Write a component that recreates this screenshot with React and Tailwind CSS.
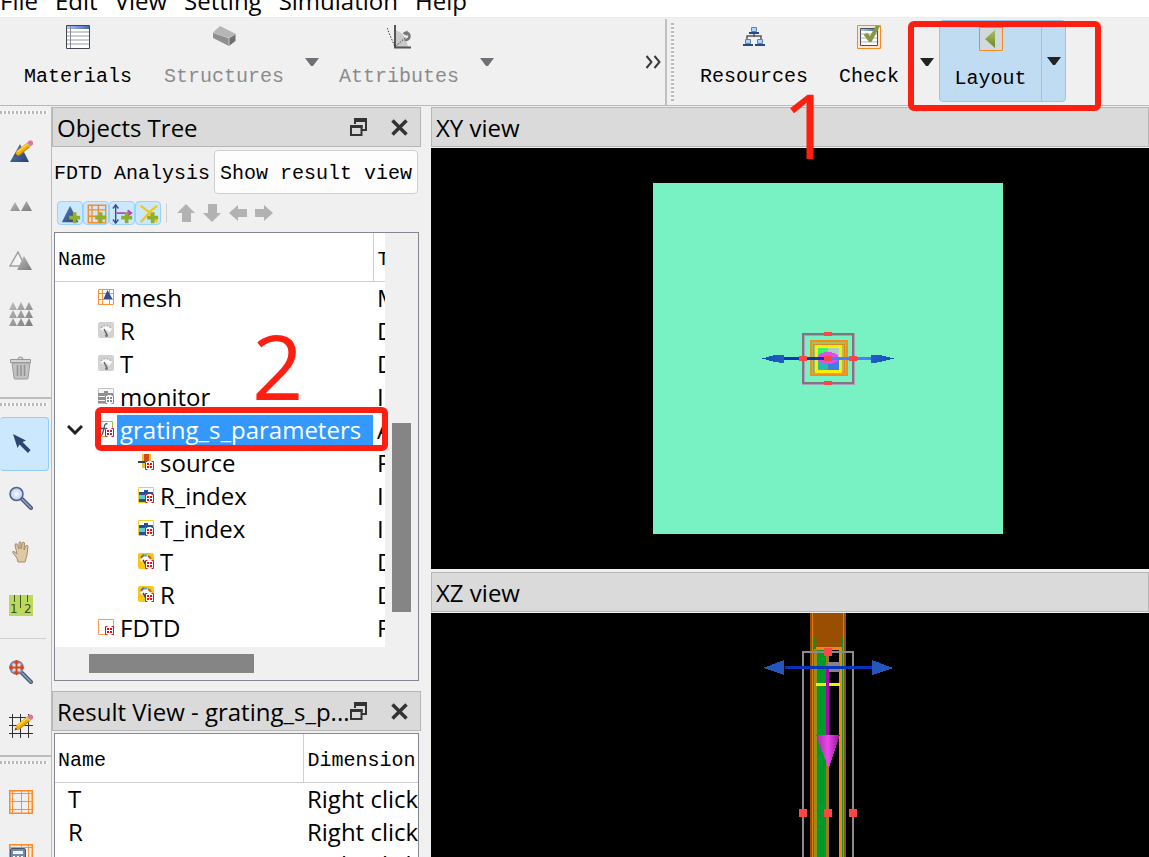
import clsx from 'clsx'

const MENUS = ['File', 'Edit', 'View', 'Setting', 'Simulation', 'Help']

const OBJECTS = [
  { name: 'mesh', type: 'Mesh', icon: 'mesh' },
  { name: 'R', type: 'DFTMonitor', icon: 'gaugeOff' },
  { name: 'T', type: 'DFTMonitor', icon: 'gaugeOff' },
  { name: 'monitor', type: 'IndexMonitor', icon: 'indexOff' },
  { name: 'grating_s_parameters', type: 'Analysis', icon: 'analysis', open: true, selected: true },
  { name: 'source', type: 'PlaneSource', icon: 'source', child: true },
  { name: 'R_index', type: 'IndexMonitor', icon: 'index', child: true },
  { name: 'T_index', type: 'IndexMonitor', icon: 'index', child: true },
  { name: 'T', type: 'DFTMonitor', icon: 'gauge', child: true },
  { name: 'R', type: 'DFTMonitor', icon: 'gauge', child: true },
  { name: 'FDTD', type: 'FDTD', icon: 'region' },
]

const RESULTS = ['T', 'R', 'S']

/* ---------- 24px toolbar icons ---------- */

function Icon({ children, className = 'size-6' }) {
  return (
    <svg viewBox="0 0 24 24" className={clsx('block shrink-0', className)} fill="none" aria-hidden="true">
      {children}
    </svg>
  )
}

function Gradients() {
  return (
    <svg className="absolute size-0" aria-hidden="true">
      <defs>
        <linearGradient id="grayTri" x1="0" y1="0" x2="1" y2="1">
          <stop offset="0" stopColor="#bdbdbd" />
          <stop offset="1" stopColor="#7c7c7c" />
        </linearGradient>
        <linearGradient id="blueTri" x1="0" y1="0" x2="1" y2="1">
          <stop offset="0" stopColor="#5d7fb8" />
          <stop offset="1" stopColor="#274074" />
        </linearGradient>
        <linearGradient id="tableHead" x1="0" y1="0" x2="1" y2="0">
          <stop offset="0" stopColor="#a9c6fb" />
          <stop offset="1" stopColor="#4868ac" />
        </linearGradient>
        <linearGradient id="greenTri" x1="0" y1="0" x2="0" y2="1">
          <stop offset="0" stopColor="#a9bd6a" />
          <stop offset="1" stopColor="#6c8a1c" />
        </linearGradient>
        <linearGradient id="cone" x1="0" y1="0" x2="1" y2="0">
          <stop offset="0" stopColor="#a828a8" />
          <stop offset="0.5" stopColor="#e848e8" />
          <stop offset="1" stopColor="#901090" />
        </linearGradient>
        <linearGradient id="arrowHead" x1="0" y1="0" x2="1" y2="0">
          <stop offset="0" stopColor="#1450b4" />
          <stop offset="0.5" stopColor="#3c78dc" />
          <stop offset="1" stopColor="#1450b4" />
        </linearGradient>
        <radialGradient id="lens">
          <stop offset="0" stopColor="#ffffff" />
          <stop offset="1" stopColor="#b4c6e4" />
        </radialGradient>
      </defs>
    </svg>
  )
}

function Pencil() {
  return (
    <>
      <path d="M6 16l1.500-5L18 2.500l4 4L11 15z" fill="#f0b000" />
      <path d="M8.500 12L18.500 4" stroke="#ffd84a" strokeWidth="1.500" />
      <path d="M9.500 15.500L21 6.500" stroke="#b97800" strokeWidth="1" />
      <path d="M18 3l2-2.500h2.500L24 2v2.500L21.500 6.500z" fill="#dd7594" />
      <path d="M17.500 3l4 4" stroke="#b9c3c9" strokeWidth="1.500" />
      <path d="M5.500 16.500l1-3 2 2z" fill="#5c4520" />
    </>
  )
}

function MaterialsIcon() {
  return (
    <Icon>
      <path d="M.5.5h23v23H.5z" fill="#fff" />
      <path d="M1 1h22v3H1z" fill="url(#tableHead)" />
      <path d="M1 7h22M1 11h22M1 15h22M1 19h22" stroke="#c9ccd6" strokeWidth="2" />
      <path d="M4.500 1v22" stroke="#8c8c98" />
      <path d="M.5.5h23v23H.5z" stroke="#45454f" />
    </Icon>
  )
}

function StructuresIcon() {
  return (
    <Icon>
      <path d="M1 7.500L8 1l16 8-7 4z" fill="#b5b5b5" />
      <path d="M1 7.500L17 13v8L1 13z" fill="#8f8f8f" />
      <path d="M17 13l6.500-4v7L17 21z" fill="#707070" />
      <path d="M1 7.500L17 13l6.500-4M17 13v8" stroke="#c4c4c4" />
    </Icon>
  )
}

function AttributesIcon() {
  return (
    <Icon>
      <path d="M8 23V5c8 2 12 9 13 18z" fill="#cacaca" />
      <path d="M8 0v22.500h16" stroke="#555" strokeWidth="2" />
      <path d="M0 3l8 19L19 12" stroke="#333" strokeWidth="1" strokeDasharray="1.500 1.500" />
      <path d="M17 8.500c3-2 5.500 0 5.500 2.500s-2 4-5 4" stroke="#777" strokeWidth="2.500" />
      <path d="M15.500 8.500l5-3v5.500z" fill="#777" />
    </Icon>
  )
}

function ResourcesIcon() {
  return (
    <Icon>
      <path d="M12 8v4M5 15v-4h14v4" stroke="#555" strokeWidth="1.500" />
      <path d="M9.500 2.500h5v4h-5zM3.500 14.500h5v4h-5zM15.500 14.500h5v4h-5z" fill="#a8d8ff" stroke="#6d7f92" />
      <path d="M7 8h10M1 20h10M13 20h10" stroke="#24498f" strokeWidth="2" />
    </Icon>
  )
}

function CheckIcon() {
  return (
    <Icon>
      <path d="M.5.500h23v23H.5z" fill="#fce6d2" stroke="#f58a20" />
      <path d="M3.500 3.500h17v17h-17z" fill="#fff" stroke="#4b4f5c" />
      <path d="M4 4h16v2H4z" fill="url(#tableHead)" />
      <path d="M4 9h16M4 13h16M4 17h16" stroke="#c9ccd6" strokeWidth="1.500" />
      <path d="M6.500 9.500l4-1.500 2.500 3L18.500 1H23L14.500 17H12z" fill="#83993b" />
    </Icon>
  )
}

function LayoutIcon() {
  return (
    <Icon>
      <path d="M.5.500h23v23H.5z" fill="#d3d8dc" stroke="#f58a20" />
      <path d="M16 3v18L6 12z" fill="url(#greenTri)" />
    </Icon>
  )
}

function Caret({ className }) {
  return (
    <svg viewBox="0 0 14 8" className={clsx('block h-2 w-3.5', className)} fill="currentColor" aria-hidden="true">
      <path d="M0 0h14L8 8H6z" />
    </svg>
  )
}

/* ---------- side toolbar icons ---------- */

const SIDE_ICONS = {
  edit: (
    <>
      <path d="M11 4l9 18H1z" fill="url(#blueTri)" />
      <Pencil />
    </>
  ),
  pair: <path d="M1 17L6 8l5 9zM12 17l5.500-10L23 17z" fill="url(#grayTri)" />,
  mirror: (
    <>
      <path d="M1 18L9 4l7 14z" fill="#f4f4f4" stroke="#a2a2a2" strokeWidth="1.500" />
      <path d="M8 22l7-14 8 14z" fill="url(#grayTri)" />
    </>
  ),
  array: (
    <path
      d="M0 8l4-8 4 8zM8 8l4-8 4 8zM16 8l4-8 4 8zM0 16l4-8 4 8zM8 16l4-8 4 8zM16 16l4-8 4 8zM0 24l4-8 4 8zM8 24l4-8 4 8zM16 24l4-8 4 8z"
      fill="url(#grayTri)"
    />
  ),
  trash: (
    <>
      <path d="M3 7h18l-2 15q0 1-1 1H6q-1 0-1-1z" fill="#c2c2c2" stroke="#9a9a9a" />
      <path d="M1.500 3.500h20v3h-20zM9 3q0-2 2.500-2T14 3" fill="#d4d4d4" stroke="#999" />
      <path d="M8.500 9v11M12 9v11M15.500 9v11" stroke="#929292" strokeWidth="1.500" />
    </>
  ),
  pointer: <path d="M4 2l13 6.500-3.500 1.500 8 8-2.500 3-8.500-8.500-2 3.500z" fill="#2c4470" />,
  zoom: (
    <>
      <path d="M13 13l9 9" stroke="#43597c" strokeWidth="4" strokeLinecap="round" />
      <path d="M13 13l9 9" stroke="#91a3bf" strokeWidth="1.500" strokeLinecap="round" />
      <circle cx="7.500" cy="8" r="6.500" fill="url(#lens)" stroke="#4a6390" strokeWidth="1.500" />
    </>
  ),
  pan: (
    <path
      d="M9 22l-1-4-4-5q-1-2 1-1.500L8 14 6 5q0-2 2-1l2 5V2.500q1-1.500 2 0V9l1.500-6.500q1.500-1 2 .5L15 10l2-4.500q2-.5 2 1L18 15l-2 7z"
      fill="#dfc8a4"
      stroke="#a58c6b"
    />
  ),
  fit: (
    <>
      <path d="M13 13l9 9" stroke="#43597c" strokeWidth="4" strokeLinecap="round" />
      <path d="M13 13l9 9" stroke="#91a3bf" strokeWidth="1.500" strokeLinecap="round" />
      <circle cx="7.500" cy="7.500" r="6.500" fill="url(#lens)" stroke="#6b7fa0" strokeWidth="1.500" />
      <path d="M7.500 1v13M1 7.500h13" stroke="#d8451c" strokeWidth="2" />
      <path d="M7.500-.5l3 4h-6zM7.500 15.500l3-4h-6zM-.5 7.500l4-3v6zM15.500 7.500l-4-3v6z" fill="#d8451c" />
    </>
  ),
  snap: (
    <>
      <path d="M3.500 0v24M11.500 0v24M19.500 0v24M0 3.500h24M0 11.500h24M0 19.500h24" stroke="#302f33" />
      <Pencil />
    </>
  ),
  grid: (
    <>
      <path d="M3.500 0v24M12.500 0v24M19.500 0v24M0 3.500h24M0 11.500h24M0 19.500h24" stroke="#fb9236" />
      <path d="M.75.750h22.500v22.500H.75z" stroke="#fb8a24" strokeWidth="1.500" />
    </>
  ),
  calc: (
    <>
      <path d="M19.500 0v24M0 3.500h24M12.500 0v24" stroke="#fb9236" />
      <path d="M.75.750h22.500v22.500H.75z" stroke="#fb8a24" strokeWidth="1.500" />
      <rect x="1.500" y="4.500" width="15" height="19" rx="1.500" fill="#7589a8" stroke="#42546f" />
      <path d="M4 7h10v3H4z" fill="#f2f5fa" />
      <path d="M4 12h2v2H4zM8 12h2v2H8zM12 12h2v2h-2z" fill="#fff" />
    </>
  ),
}

function SideButton({ name, label, active }) {
  return (
    <button
      type="button"
      aria-label={label}
      className={clsx(
        'flex h-[54px] w-[49px] shrink-0 items-center rounded-sm border border-l-0 pl-[9px]',
        active ? 'border-[#92ccfb] bg-[#cce8ff]' : 'border-transparent',
      )}
    >
      <Icon>{SIDE_ICONS[name]}</Icon>
    </button>
  )
}

function RulerButton() {
  return (
    <button type="button" aria-label="Ruler" className="flex h-[54px] w-[49px] shrink-0 items-center pl-[9px]">
      <svg viewBox="0 0 24 22" className="block h-[22px] w-6" aria-hidden="true">
        <path d="M0 0h24v21H0z" fill="#bbd95a" />
        <path d="M5.500 0v7M11.500 0v13M18.500 0v7" stroke="#41562f" />
        <text x="1" y="18" fontSize="12" fill="#3c4d30" fontFamily="DejaVu Sans">1</text>
        <text x="15" y="18" fontSize="12" fill="#3c4d30" fontFamily="DejaVu Sans">2</text>
      </svg>
    </button>
  )
}

function Handle() {
  return (
    <div className="mt-1 mb-[11px] h-[3px] w-[48px] shrink-0 bg-[repeating-linear-gradient(90deg,#b9b9b9_0_2px,#f8f8f8_2px_4px)]" />
  )
}

function SideToolbar() {
  return (
    <aside className="flex w-[51px] shrink-0 flex-col overflow-hidden">
      <div className="flex shrink-0 flex-col border-b-2 border-[#bcbcbc] pb-0.5">
        <Handle />
        <SideButton name="edit" label="Edit object" />
        <SideButton name="pair" label="Duplicate" />
        <SideButton name="mirror" label="Mirror" />
        <SideButton name="array" label="Array" />
        <SideButton name="trash" label="Delete" />
      </div>
      <div className="flex shrink-0 flex-col border-b-2 border-[#bcbcbc] pb-0.5">
        <Handle />
        <SideButton name="pointer" label="Select" active />
        <SideButton name="zoom" label="Zoom" />
        <SideButton name="pan" label="Pan" />
        <RulerButton />
        <div className="mt-[5px] mb-1.5 h-px w-[46px] bg-[#cfcfcf]" />
        <SideButton name="fit" label="Zoom extent" />
        <SideButton name="snap" label="Snap settings" />
      </div>
      <div className="flex shrink-0 flex-col">
        <Handle />
        <SideButton name="grid" label="Show mesh" />
        <SideButton name="calc" label="Mesh calculator" />
      </div>
    </aside>
  )
}

/* ---------- 16px tree icons ---------- */

function Brackets({ color = '#e0101c' }) {
  return (
    <>
      <path d="M7 7h9v9H7z" fill="#fff" />
      <path d="M9.500 7.500h-2v8h2M13.500 7.500h2v8h-2" stroke={color} />
      <path d="M9 9h2v2H9zM12 9h2v2h-2zM9 12h2v2H9zM12 12h2v2h-2z" fill={color} />
    </>
  )
}

const TREE_ICONS = {
  mesh: (
    <>
      <path d="M.5.500h15v15H.5zM4.500 0v16M11.500 0v16M0 4.500h16M0 10.500h16" stroke="#fb9236" />
      <path d="M9.500 1l5 9h-9z" fill="#31508c" />
    </>
  ),
  gaugeOff: (
    <>
      <rect width="16" height="16" rx="2" fill="#d2d2d2" />
      <path d="M2 7q6-8 12 0l-3 4-2-3-2 2z" fill="#fafafa" />
      <path d="M3 6q5-5 10 0" stroke="#b0b0b0" strokeWidth="1.500" strokeDasharray="2 1" />
      <path d="M6 7l3 6" stroke="#666" strokeWidth="1.500" />
      <circle cx="8.500" cy="13.500" r="1.500" fill="#777" />
    </>
  ),
  indexOff: (
    <>
      <path d="M.5.500h15v15H.5z" fill="#f6f6f6" stroke="#c4c4c4" />
      <path d="M0 5h15v3H0zM0 9h9v3H0zM0 13h9v2H0zM6 3h4v3H6z" fill="#8f8f8f" />
      <Brackets color="#8a8a8a" />
    </>
  ),
  analysis: (
    <>
      <path d="M.5.500h14v15H.5z" fill="#fff" stroke="#aab84c" />
      <path d="M9.500 3q-2.500-1-3 2L4.500 13q-1 2-3 1M3 7.500h5.500" stroke="#31598c" strokeWidth="1.300" />
      <Brackets color="#b3224a" />
    </>
  ),
  source: (
    <>
      <path d="M4 0h9v14H4z" fill="#f3bf22" />
      <path d="M6 0h5v7H6z" fill="#cf4a1c" />
      <path d="M0 8h9" stroke="#384650" strokeWidth="2" />
      <Brackets />
    </>
  ),
  index: (
    <>
      <path d="M.5.500h15v15H.5z" fill="#fff" stroke="#f0cf2e" />
      <path d="M6 3h4v2h5v3H1V5h5z" fill="#27509c" />
      <path d="M1 8h8v4H1z" fill="#58cbd2" />
      <path d="M1 12h8v3H1z" fill="#27509c" />
      <Brackets />
    </>
  ),
  gauge: (
    <>
      <rect width="16" height="16" rx="2" fill="#f8c816" />
      <path d="M2 7q6-9 12 0l-3 4-2-3-3 2z" fill="#fff" />
      <path d="M3 5q1-2 3-3" stroke="#8b55b5" strokeWidth="2" />
      <path d="M6 2.500h3" stroke="#48b0a8" strokeWidth="2" />
      <path d="M10 3q2 1 3 3" stroke="#e05330" strokeWidth="2" />
      <path d="M5 7l3 5" stroke="#444" strokeWidth="1.500" />
      <Brackets />
    </>
  ),
  region: (
    <>
      <path d="M.5.500h15v15H.5z" fill="#fff" stroke="#fb9a4a" />
      <Brackets />
    </>
  ),
}

function TreeIcon({ name }) {
  return (
    <svg viewBox="0 0 16 16" className="mb-0.5 block size-4 shrink-0" fill="none" aria-hidden="true">
      {TREE_ICONS[name]}
    </svg>
  )
}

/* ---------- top bars ---------- */

function MenuBar() {
  return (
    <nav className="flex h-[18px] shrink-0 items-end gap-[17px] overflow-hidden border-b border-[#ececec] bg-white">
      {MENUS.map((m) => (
        <button key={m} type="button" className="leading-8">{m}</button>
      ))}
    </nav>
  )
}

function ToolButton({ icon, label, disabled }) {
  return (
    <button
      type="button"
      disabled={disabled}
      className={clsx(
        "flex flex-col items-center gap-4 pt-1.5 font-['Liberation_Mono',monospace] text-[20px] leading-6",
        disabled ? 'text-[#8b8b8b]' : 'text-black',
      )}
    >
      {icon}
      {label}
    </button>
  )
}

function CaretButton({ label, className }) {
  return (
    <button type="button" aria-label={label} className={clsx('flex items-center', className)}>
      <Caret />
    </button>
  )
}

function Toolbar() {
  return (
    <header className="grid h-[88px] shrink-0 grid-cols-[667fr_482fr] border-b border-[#b8b8b8] pt-px">
      <div className="flex border-r-2 border-[#c0c0c0] pr-1 pl-6">
        <ToolButton icon={<MaterialsIcon />} label="Materials" />
        <div className="ml-8 flex gap-[21px]">
          <ToolButton icon={<StructuresIcon />} label="Structures" disabled />
          <CaretButton label="More structures" className="text-[#707074]" />
        </div>
        <div className="ml-5 flex gap-[21px]">
          <ToolButton icon={<AttributesIcon />} label="Attributes" disabled />
          <CaretButton label="More attributes" className="text-[#707074]" />
        </div>
        <button type="button" aria-label="Show more" className="ml-auto">
          <svg viewBox="0 0 16 14" className="block h-3.5 w-4" fill="none" aria-hidden="true">
            <path d="M1.500 1l5 6-5 6M9.500 1l5 6-5 6" stroke="#3a3a3a" strokeWidth="2" />
          </svg>
        </button>
      </div>
      <div className="flex pl-1">
        <div className="mt-1 h-[78px] w-[3px] bg-[repeating-linear-gradient(180deg,#b9b9b9_0_2px,#f8f8f8_2px_4px)]" />
        <div className="ml-[26px] flex">
          <ToolButton icon={<ResourcesIcon />} label="Resources" />
        </div>
        <div className="ml-[31px] flex gap-[21px]">
          <ToolButton icon={<CheckIcon />} label="Check" />
          <CaretButton label="Check options" className="text-[#222]" />
        </div>
        <div className="relative mt-px ml-[5px] flex h-[82px] rounded-sm border border-[#92c6ee] bg-[#c0dcf2]">
          <div className="flex w-[101px] justify-center">
            <ToolButton icon={<LayoutIcon />} label="Layout" />
          </div>
          <CaretButton label="Layout options" className="w-6 justify-center border-l border-[#92c6ee] text-[#222]" />
          <div className="pointer-events-none absolute top-0 -right-9 -bottom-2.5 -left-8 z-10 rounded-md border-[6px] border-[#ff1f11]" />
        </div>
      </div>
    </header>
  )
}

/* ---------- docks ---------- */

function DockTitle({ title, closable }) {
  return (
    <div className="relative flex h-10 shrink-0 items-center border border-[#b6b6b6] bg-[#dadada] pt-0.5 pl-1">
      <h2 className="whitespace-nowrap">{title}</h2>
      {closable && (
        <div className="absolute inset-y-0 right-3 flex items-center gap-6">
          <button type="button" aria-label="Float">
            <svg viewBox="0 0 17 18" className="block h-[18px] w-[17px]" fill="none" aria-hidden="true">
              <path d="M5 6V1.500h11V12h-4.500" stroke="#333" strokeWidth="2" />
              <path d="M4 2h13" stroke="#333" strokeWidth="4" />
              <path d="M1 8h10.500v9H1z" stroke="#333" strokeWidth="2" />
              <path d="M0 8.500h12.500" stroke="#333" strokeWidth="3" />
            </svg>
          </button>
          <button type="button" aria-label="Close">
            <svg viewBox="0 0 17 17" className="block size-[17px]" fill="none" aria-hidden="true">
              <path d="M1.500 1.500l14 14M15.500 1.500l-14 14" stroke="#333" strokeWidth="3.500" />
            </svg>
          </button>
        </div>
      )}
    </div>
  )
}

const PLUS = <path d="M14 10h4v4h4v4h-4v4h-4v-4h-4v-4h4z" fill="#8fae2c" />

const ADD_ICONS = [
  { label: 'Show structures', art: <path d="M11 3l9 18H2z" fill="url(#blueTri)" /> },
  {
    label: 'Show mesh',
    art: <path d="M2.500 2.500h19v19h-19zM6.500 2v20M13.500 2v20M2 7.500h20M2 14.500h20" stroke="#fb8a24" strokeWidth="1.500" />,
  },
  {
    label: 'Show sources',
    art: (
      <>
        <path d="M4 3v18M1 6l3-4 3 4M1 18l3 4 3-4" stroke="#2f4c8c" strokeWidth="1.500" />
        <path d="M5 11h15M17 8l4 3-4 3" stroke="#c13bd9" strokeWidth="2" />
      </>
    ),
  },
  { label: 'Show monitors', art: <path d="M3 3l9 7 9-7M3 21l9-10 9 10" stroke="#f0c81c" strokeWidth="2.500" /> },
]

const MOVES = [
  { label: 'Move up', d: 'M9 0l9 9h-4v9H5V9H0z' },
  { label: 'Move down', d: 'M9 18L0 9h5V0h9v9h4z' },
  { label: 'Move out', d: 'M0 9l9-8v4h9v8H9v4z' },
  { label: 'Move in', d: 'M18 9l-9-8v4H0v8h9v4z' },
]

function TreeTools() {
  return (
    <div className="mt-[7px] flex h-6 shrink-0 items-center pl-[5px]">
      {ADD_ICONS.map(({ label, art }) => (
        <button
          key={label}
          type="button"
          aria-label={label}
          className="flex h-6 w-[26px] items-center justify-center rounded-sm border border-[#99d1ff] bg-[#cce8ff] pt-0.5 pl-0.5"
        >
          <Icon className="size-[22px]">
            {art}
            {PLUS}
          </Icon>
        </button>
      ))}
      <div className="mr-1 ml-[5px] h-5 border-l border-[#cfcfcf]" />
      {MOVES.map(({ label, d }) => (
        <button key={label} type="button" aria-label={label} className="flex h-6 w-[26px] items-center justify-center pl-1">
          <svg viewBox="0 0 18 18" className="block size-[18px]" aria-hidden="true">
            <path d={d} fill="#b2b2b2" />
          </svg>
        </button>
      ))}
    </div>
  )
}

function ObjectRow({ row }) {
  return (
    <tr className="h-[33px]">
      <td className="overflow-hidden p-0">
        <div className={clsx('flex h-[33px] items-center pl-3', row.child && 'ml-10')}>
          <span className="mr-[15px] w-4 shrink-0">
            {row.open && (
              <svg viewBox="0 0 16 10" className="block h-2.5 w-4" fill="none" aria-hidden="true">
                <path d="M1 1l7 7 7-7" stroke="#222" strokeWidth="3" />
              </svg>
            )}
          </span>
          <TreeIcon name={row.icon} />
          <span
            className={clsx(
              'ml-[3px] flex h-[31px] items-center pl-[3px] whitespace-nowrap',
              row.selected && 'flex-1 bg-[#3399ff] text-white',
            )}
          >
            {row.name}
          </span>
        </div>
      </td>
      <td className="overflow-hidden p-0 pl-1 whitespace-nowrap">{row.type}</td>
    </tr>
  )
}

function ObjectsTree() {
  return (
    <section className="flex min-h-0 flex-1 flex-col">
      <DockTitle title="Objects Tree" closable />
      <div className="mt-[3px] flex h-11 shrink-0 items-center justify-between pr-[3px] pl-0.5 font-['Liberation_Mono',monospace] text-[20px]">
        <span className="pt-1 whitespace-nowrap">FDTD Analysis</span>
        <button type="button" className="h-11 w-[204px] rounded border border-[#cfcfcf] bg-[#fdfdfd] pt-1 whitespace-nowrap">
          Show result view
        </button>
      </div>
      <TreeTools />
      <div className="mx-0.5 mt-[7px] mb-2.5 flex min-h-0 flex-1 flex-col border border-[#828790]">
        <div className="flex min-h-0 flex-1">
          <div className="relative min-w-0 flex-1 overflow-hidden bg-white">
            <table className="w-full table-fixed border-collapse text-left">
              <colgroup>
                <col />
                <col className="w-3" />
              </colgroup>
              <thead>
                <tr className="h-12 border-b border-[#cfcfcf] font-['Liberation_Mono',monospace] text-[20px]">
                  <th className="border-r border-[#cfcfcf] p-0 pt-1.5 pl-[3px] font-normal">Name</th>
                  <th className="overflow-hidden p-0 pt-1.5 pl-1 font-normal">Type</th>
                </tr>
              </thead>
              <tbody>
                {OBJECTS.map((row, i) => (
                  <ObjectRow key={i} row={row} />
                ))}
              </tbody>
            </table>
            <span className="absolute top-[87px] left-[197px] text-[90px] leading-[90px] text-[#ff1f11]">2</span>
          </div>
          <div className="relative w-[33px] shrink-0">
            <div className="absolute top-[190px] left-[7px] h-[189px] w-[19px] bg-[#858585]" />
          </div>
        </div>
        <div className="h-[33px] shrink-0 pt-[7px] pl-[34px]">
          <div className="h-[19px] w-[165px] bg-[#858585]" />
        </div>
      </div>
    </section>
  )
}

function ResultView() {
  return (
    <section className="flex h-[166px] shrink-0 flex-col">
      <DockTitle title="Result View - grating_s_p..." closable />
      <div className="mx-0.5 mt-0.5 min-h-0 flex-1 overflow-hidden border border-b-0 border-[#828790] bg-white">
        <table className="w-full table-fixed border-collapse text-left">
          <colgroup>
            <col className="w-[248px]" />
            <col />
          </colgroup>
          <thead>
            <tr className="h-12 border-b border-[#cfcfcf] font-['Liberation_Mono',monospace] text-[20px]">
              <th className="border-r border-[#cfcfcf] p-0 pt-1.5 pl-[3px] font-normal">Name</th>
              <th className="overflow-hidden p-0 pt-1.5 pl-1 font-normal">Dimension</th>
            </tr>
          </thead>
          <tbody>
            {RESULTS.map((name) => (
              <tr key={name} className="h-[33px]">
                <td className="p-0 pl-[13px]">{name}</td>
                <td className="overflow-hidden p-0 pl-1 whitespace-nowrap">Right click</td>
              </tr>
            ))}
          </tbody>
        </table>
      </div>
    </section>
  )
}

/* ---------- viewports ---------- */

function XYScene() {
  return (
    <svg viewBox="0 0 718 421" className="block size-full" shapeRendering="crispEdges" role="img" aria-label="XY view">
      <path d="M222 35h350v351H222z" fill="#78f1c3" />
      <path d="M372 186h50v49h-50z" fill="none" stroke="#a8a0b8" strokeWidth="3" />
      <path d="M372 186h50v49h-50z" fill="none" stroke="#84747e" strokeWidth="2" />
      <path d="M380 193h36v34h-36z" fill="#a8c060" stroke="#f58c1c" strokeWidth="2" />
      <path d="M382 196h31v28h-31z" fill="none" stroke="#dc8a1c" strokeWidth="1" />
      <path d="M385 198h24v25h-24z" fill="#2fd8a0" stroke="#f7f000" strokeWidth="3" />
      <path d="M387 200h10v10h-10z" fill="#3cf070" />
      <path d="M397 200h11v10h-11z" fill="#a8cfc0" />
      <path d="M387 211h11v11h-11z" fill="#2fb7b0" />
      <path d="M397 211h11v11h-11z" fill="#3c7fe0" />
      <ellipse cx="397" cy="210" rx="11" ry="6" fill="#dc50e8" />
      <path d="M353 209h45v3h-45z" fill="#0638b8" />
      <path d="M397 209h57v3h-57z" fill="#4a7cff" />
      <path d="M331 210.500l11-3 11-1v9l-11-2zM463 210.500l-12-3-11-1v9l11-2z" fill="url(#arrowHead)" />
      <path
        d="M393 184h8v4h-8zM393 233h8v4h-8zM368 208h8v5h-8zM393 208h8v5h-8zM418 208h8v5h-8z"
        fill="#ff4646"
      />
    </svg>
  )
}

function XZScene() {
  return (
    <svg
      viewBox="0 0 718 244"
      preserveAspectRatio="xMidYMin slice"
      className="block size-full"
      shapeRendering="crispEdges"
      role="img"
      aria-label="XZ view"
    >
      <path d="M379 0h36v244h-36z" fill="#9a4e02" />
      <path d="M382 14l3 20v210h-3zM413 14l-3 20v210h3z" fill="#009a2c" />
      <path d="M381 0h1v244h-1zM412 0h1v244h-1z" fill="#e07a10" />
      <path d="M385 34h26v210h-26z" fill="#f58410" />
      <path d="M383 36h3v208h-3z" fill="#9c8a18" />
      <path d="M386 37h10v207h-10z" fill="#009a2c" />
      <path d="M395 37h3v207h-3z" fill="#9c7a14" />
      <path d="M398 37h10v207h-10z" fill="#000" />
      <path d="M397 49h12v10h-12z" fill="#85808c" />
      <path d="M372 244V39h50v205" fill="none" stroke="#8a8a8a" strokeWidth="2" />
      <path d="M354 53h100v3H354z" fill="#0434b8" />
      <path d="M332 55l21-8v15zM462 55l-21-8v15z" fill="#2456be" />
      <path d="M385 70h24v3h-24z" fill="#f2f000" />
      <path d="M395 56h3v68h-3z" fill="#b400b4" />
      <path d="M385 122h24l-11 32h-1z" fill="url(#cone)" />
      <path d="M393 35h8v8h-8zM368 196h8v8h-8zM393 196h8v8h-8zM418 196h8v8h-8z" fill="#ff4646" />
    </svg>
  )
}

export default function App() {
  return (
    <div className="relative flex h-screen flex-col overflow-hidden bg-[#f0f0f0] font-['Open_Sans',sans-serif] text-[24px] leading-8 text-black">
      <Gradients />
      <MenuBar />
      <Toolbar />
      <main className="flex min-h-0 flex-1 pt-px">
        <SideToolbar />
        <div className="flex w-[370px] shrink-0 flex-col border-l border-[#bcbcbc]">
          <ObjectsTree />
          <ResultView />
        </div>
        <div className="ml-2.5 flex min-w-0 flex-1 flex-col">
          <section className="flex min-h-0 flex-1 flex-col">
            <DockTitle title="XY view" />
            <div className="mt-px min-h-0 flex-1 bg-black">
              <XYScene />
            </div>
          </section>
          <section className="mt-[3px] flex h-[285px] shrink-0 flex-col">
            <DockTitle title="XZ view" />
            <div className="mt-px min-h-0 flex-1 bg-black">
              <XZScene />
            </div>
          </section>
        </div>
      </main>
      <span className="absolute top-[79px] left-[782px] z-10 text-[90px] leading-[90px] text-[#ff1f11]">1</span>
      <div className="pointer-events-none absolute top-[407px] left-[95px] z-10 h-11 w-[293px] rounded-md border-[6px] border-[#ff1f11]" />
    </div>
  )
}
